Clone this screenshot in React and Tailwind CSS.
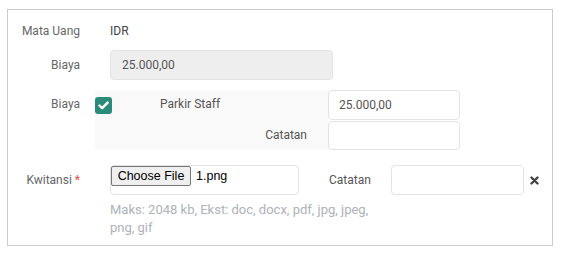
export default function App() {
  return (
    <div className="w-[565px] h-[256px] bg-white pt-[9px] pl-[7px] font-['Roboto',sans-serif] text-[12px] text-[#555]">
      <div className="w-[546px] h-[237px] border border-[#cccccc]">
        {/* Mata Uang */}
        <div className="flex items-center h-[20px] mt-[11px]">
          <div className="w-[72px] text-right text-[#666]">Mata Uang</div>
          <div className="ml-[30px] text-[#444]">IDR</div>
        </div>

        {/* Biaya total */}
        <div className="flex items-center h-[30px] mt-[9px]">
          <div className="w-[72px] text-right text-[#666]">Biaya</div>
          <div className="ml-[30px] w-[223px] h-[30px] flex items-center pl-[11px] bg-[#eeeeee] border border-[#e3e3e3] rounded-[4px] text-[#555]">
            25.000,00
          </div>
        </div>

        {/* Biaya rincian */}
        <div className="flex mt-[10px] h-[60px]">
          <div className="w-[72px] text-right text-[#666] h-[28px] flex items-center justify-end">Biaya</div>
          <div className="ml-[15px] w-[233px] h-[60px] bg-[#f9f9f9] flex flex-col">
            <div className="flex items-center h-[30px]">
              <div className="w-[17px] h-[17px] rounded-[3px] bg-[#2b8a78] flex items-center justify-center">
                <svg width="11" height="9" viewBox="0 0 11 9">
                  <path d="M1.5 4.6 L4.2 7.2 L9.6 1.6" fill="none" stroke="white" strokeWidth="2.4" strokeLinecap="round" strokeLinejoin="round" />
                </svg>
              </div>
              <div className="ml-[48px] text-[#555] -mt-[3px]">Parkir Staff</div>
            </div>
            <div className="flex items-center justify-end h-[30px] pr-[21px] text-[#555]">Catatan</div>
          </div>
          <div className="flex flex-col">
            <div className="w-[132px] h-[30px] border border-[#e3e3e3] rounded-[4px] bg-white flex items-center pl-[10px] text-[#555]">
              25.000,00
            </div>
            <div className="w-[132px] h-[29px] mt-[1px] border border-[#e3e3e3] rounded-[4px] bg-white"></div>
          </div>
        </div>

        {/* Kwitansi */}
        <div className="flex mt-[15px]">
          <div className="w-[72px] h-[30px] flex items-center justify-end text-[#666]">
            Kwitansi<span className="ml-[3px] text-[#e74c3c]">*</span>
          </div>
          <div className="ml-[30px] w-[189px] flex flex-col">
            <div className="h-[30px] border border-[#e3e3e3] rounded-[4px] bg-white flex items-start">
              <div className="w-[80px] h-[20px] flex items-center justify-center bg-[#efefef] border border-[#767676] rounded-[2px] font-['Liberation_Sans',Arial,sans-serif] text-[12.5px] text-black">
                Choose File
              </div>
              <div className="ml-[5px] h-[20px] flex items-center font-['Liberation_Sans',Arial,sans-serif] text-[12.5px] text-black">1.png</div>
            </div>
            <div className="mt-[6px] text-[13px] leading-[18px] text-[#aeb2b9] whitespace-nowrap">
              Maks: 2048 kb, Ekst: doc, docx, pdf, jpg, jpeg,
              <br />
              png, gif
            </div>
          </div>
          <div className="ml-[30px] h-[30px] flex items-center text-[#555]">Catatan</div>
          <div className="ml-[20px] w-[133px] h-[30px] border border-[#e3e3e3] rounded-[4px] bg-white"></div>
          <div className="ml-[6px] h-[30px] flex items-center">
            <svg width="9" height="9" viewBox="0 0 9 9">
              <path d="M1.5 1.5 L7.5 7.5 M7.5 1.5 L1.5 7.5" stroke="#444" strokeWidth="2.4" strokeLinecap="round" />
            </svg>
          </div>
        </div>
      </div>
    </div>
  );
}
